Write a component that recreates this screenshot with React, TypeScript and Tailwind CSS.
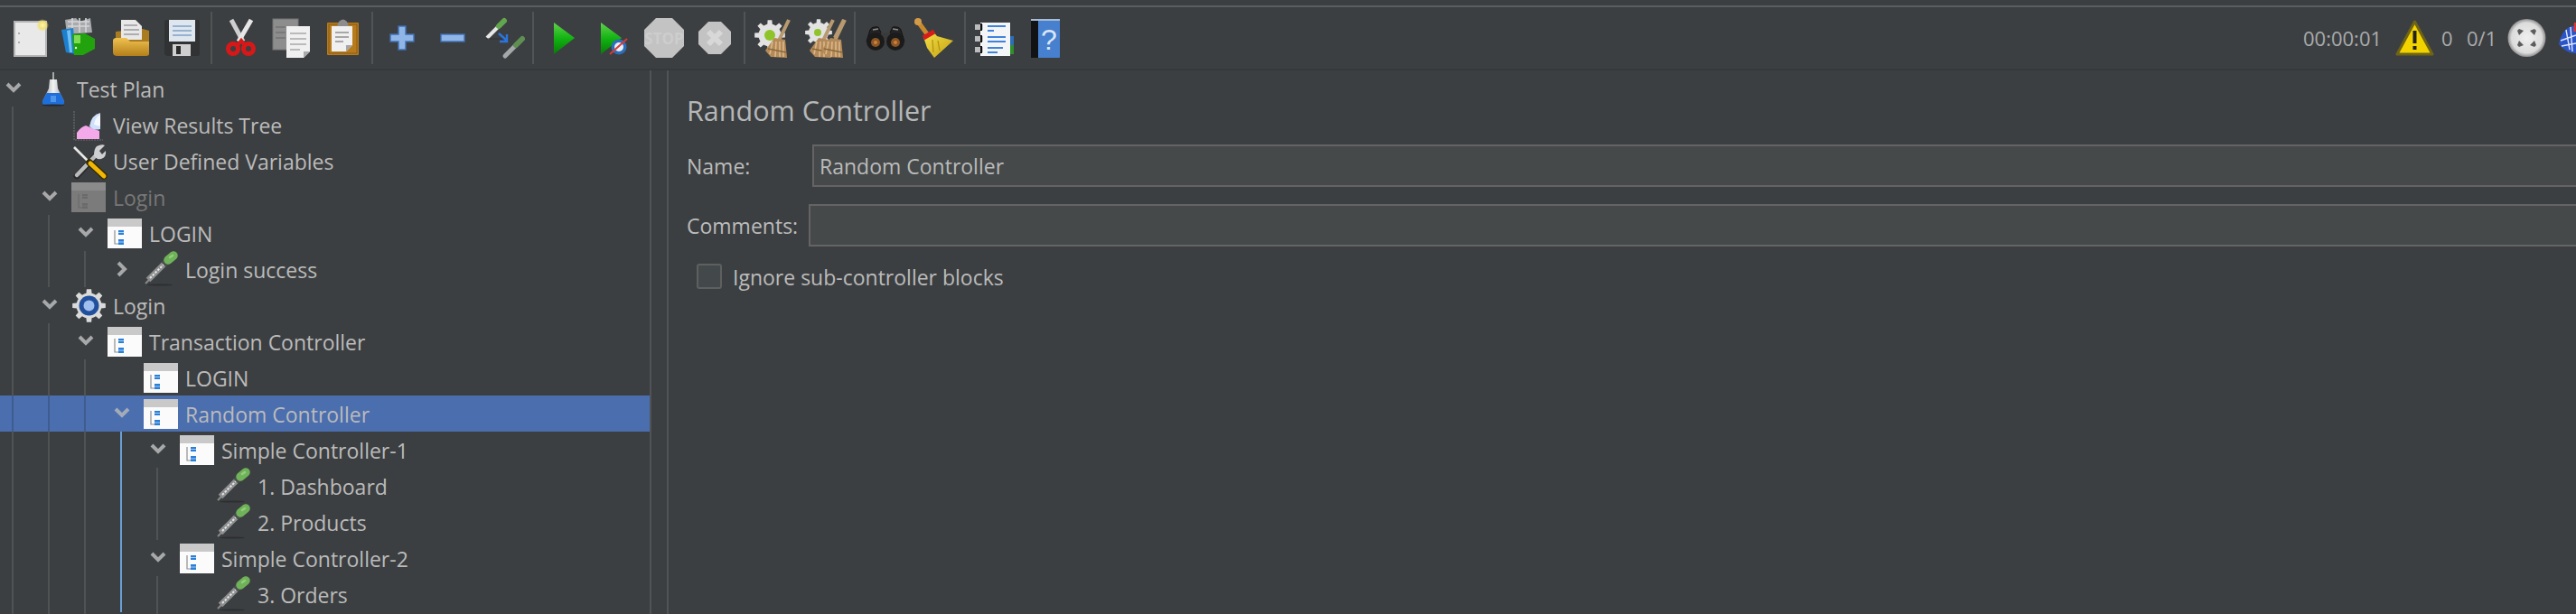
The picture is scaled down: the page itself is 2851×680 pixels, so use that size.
import React from "react";

const font = { fontFamily: '"Open Sans", "Noto Sans", sans-serif' };

function gearPath(cx: number, cy: number, ro: number, ri: number, teeth: number) {
  const pts: string[] = [];
  const step = (Math.PI * 2) / teeth;
  for (let i = 0; i < teeth; i++) {
    const a = i * step - Math.PI / 2;
    const list: [number, number][] = [
      [ri, a - step * 0.5],
      [ri, a - step * 0.28],
      [ro, a - step * 0.18],
      [ro, a + step * 0.18],
      [ri, a + step * 0.28],
    ];
    for (const [r, t] of list) pts.push(`${(cx + r * Math.cos(t)).toFixed(2)} ${(cy + r * Math.sin(t)).toFixed(2)}`);
  }
  return "M" + pts.join("L") + "Z";
}

function Tb({ left, children }: { left: number; children: React.ReactNode }) {
  return (
    <div className="w-[56px] h-full shrink-0 flex items-center justify-center">
      <svg width={48} height={48} viewBox={`${left} 18 48 48`}>
        {children}
      </svg>
    </div>
  );
}

function Sep() {
  return (
    <div className="w-[10px] h-full shrink-0 flex items-center justify-center">
      <div className="w-[2px] h-[58px] bg-[#515455]" />
    </div>
  );
}

const Broom = ({ x, y, s = 1 }: { x: number; y: number; s?: number }) => (
  <g transform={`translate(${x} ${y}) scale(${s})`}>
    <path d="M26 0 L15 23" stroke="#b89a70" strokeWidth="4" fill="none" />
    <path d="M10 20 L22 22 L24 42 L6 41 L0 34 Z" fill="#b58a58" />
    <path d="M8 24 L5 38 M12 24 L11 41 M16 24 L16 41 M20 24 L20 41" stroke="#d8b88c" strokeWidth="1.6" />
    <path d="M3 32 L23 36" stroke="#8a6738" strokeWidth="1.4" />
  </g>
);

function Toolbar() {
  return (
    <div className="h-[68px] flex items-center pl-[5px] border-b-2 border-[#36393b] box-content shrink-0">
      <Tb left={9}>
        <defs>
          <radialGradient id="sun">
            <stop offset="0" stopColor="#fff6b0" />
            <stop offset="0.55" stopColor="#f1e07a" />
            <stop offset="1" stopColor="#f1e07a" stopOpacity="0" />
          </radialGradient>
        </defs>
        <rect x="16" y="24" width="35" height="38" fill="#e9e9e9" stroke="#b4b4b4" strokeWidth="2" />
        <circle cx="21" cy="37" r="1" fill="#999" />
        <circle cx="21" cy="47" r="1" fill="#999" />
        <circle cx="47" cy="28" r="7" fill="url(#sun)" />
      </Tb>
      <Tb left={65}>
        <path d="M72 22 L84 20 L88 24 L100 20 L102 36 L74 38 Z" fill="#a8aaad" />
        <path d="M75 24 L99 24 M75 29 L99 29 M80 20 L80 36 M88 20 L88 36 M95 20 L95 36" stroke="#d5d6d8" strokeWidth="1.6" />
        <path d="M68 33 L81 31 L84 60 L73 58 Z" fill="#1d7fd0" />
        <path d="M74 34 L78 33 L80 58 L77 58 Z" fill="#6ec1f0" />
        <path d="M80 38 L94 37 L105 43 L105 54 L92 61 L82 61 Z" fill="#22a30e" />
        <path d="M82 39 L89 39 L89 48 L82 48 Z" fill="#7fdc52" />
        <circle cx="84" cy="53" r="1.2" fill="#e8ffe0" />
      </Tb>
      <Tb left={121}>
        <defs>
          <linearGradient id="fold" x1="0" y1="0" x2="0" y2="1">
            <stop offset="0" stopColor="#f0c14f" />
            <stop offset="1" stopColor="#b37f1a" />
          </linearGradient>
        </defs>
        <path d="M128 35 L158 32 L165 34 L165 60 L128 60 Z" fill="#a97c22" />
        <path d="M134 22 L150 22 L157 29 L157 44 L134 44 Z" fill="#e8e8e8" />
        <path d="M137 28 L152 28 M137 33 L154 33 M137 38 L154 38" stroke="#9a9a9a" strokeWidth="1.6" />
        <path d="M125 45 Q125 42 129 42 L140 42 L144 46 L165 46 L165 60 Q165 62 160 62 L130 62 Q125 62 125 58 Z" fill="url(#fold)" />
      </Tb>
      <Tb left={177}>
        <path d="M182 24 Q182 22 184 22 L220 22 L221 24 L221 60 Q221 62 218 62 L186 62 Q182 62 182 59 Z" fill="#303234" />
        <rect x="187" y="22" width="29" height="24" fill="#dfe6ee" />
        <path d="M191 29 L212 29 M191 34 L212 34 M191 39 L212 39" stroke="#7ea2c8" strokeWidth="1.7" />
        <rect x="191" y="49" width="20" height="13" fill="#cfcfcf" />
        <rect x="195" y="51" width="5" height="9" fill="#2c2c2c" />
      </Tb>
      <Sep />
      <Tb left={243}>
        <path d="M256 22 L269 46" stroke="#cfcfcf" strokeWidth="5" />
        <path d="M278 22 L264 46" stroke="#e6e6e6" strokeWidth="5" />
        <circle cx="258" cy="54" r="5.5" fill="none" stroke="#d81818" strokeWidth="5" />
        <circle cx="275" cy="54" r="5.5" fill="none" stroke="#d81818" strokeWidth="5" />
        <path d="M263 50 L267 45 L271 50" stroke="#d81818" strokeWidth="4" fill="none" />
      </Tb>
      <Tb left={299}>
        <rect x="302" y="21" width="28" height="34" fill="#8d8d8d" stroke="#777" strokeWidth="1" />
        <path d="M305 30 L316 30 M305 36 L316 36 M305 42 L316 42" stroke="#737373" strokeWidth="1.7" />
        <path d="M317 29 L343 29 L343 57 L336 64 L317 64 Z" fill="#f0f0f0" />
        <path d="M343 57 L336 57 L336 64 Z" fill="#aaa" />
        <path d="M321 37 L339 37 M321 43 L339 43 M321 49 L339 49 M321 55 L332 55" stroke="#a8a8a8" strokeWidth="1.7" />
      </Tb>
      <Tb left={355}>
        <rect x="362" y="25" width="35" height="36" rx="1" fill="#b87b1c" />
        <rect x="364" y="27" width="31" height="32" fill="none" stroke="#8a5a12" strokeWidth="1" />
        <path d="M367 29 L390 29 L390 50 L383 57 L367 57 Z" fill="#f0f0f0" />
        <path d="M390 50 L383 50 L383 57 Z" fill="#a5a5a5" />
        <path d="M371 36 L386 36 M371 41 L386 41 M371 46 L380 46" stroke="#8f8f8f" strokeWidth="1.7" />
        <path d="M373 29 L375 24 Q380 19 384 24 L386 29 Z" fill="#8d8d8d" />
      </Tb>
      <Sep />
      <Tb left={421}>
        <path d="M441 29 H449 V38 H458 V46 H449 V55 H441 V46 H432 V38 H441 Z" fill="#8fb6e6" stroke="#3f6fb5" strokeWidth="1.4" />
      </Tb>
      <Tb left={477}>
        <rect x="488" y="38" width="26" height="8" fill="#8fb6e6" stroke="#3f6fb5" strokeWidth="1.4" />
      </Tb>
      <Tb left={533}>
        <path d="M539 42 L552 29" stroke="#e6e6e6" strokeWidth="4" />
        <path d="M552 29 L558 23" stroke="#62a64e" strokeWidth="6" strokeLinecap="round" />
        <path d="M538 43 L562 43" stroke="#2e3032" strokeWidth="1" />
        <path d="M552 37 L561 45 M561 38 L561 46 L553 46" stroke="#2b74e0" strokeWidth="2.4" fill="none" />
        <path d="M559 62 L571 50" stroke="#a5a8a9" strokeWidth="5" strokeLinecap="round" />
        <path d="M571 50 L578 43" stroke="#5f8f52" strokeWidth="6" strokeLinecap="round" />
      </Tb>
      <Sep />
      <Tb left={599}>
        <defs>
          <linearGradient id="pl" x1="0" y1="0" x2="0" y2="1">
            <stop offset="0" stopColor="#62d24c" />
            <stop offset="0.5" stopColor="#12b312" />
            <stop offset="1" stopColor="#067d06" />
          </linearGradient>
        </defs>
        <path d="M613 25 L636 42 L613 60 Z" fill="url(#pl)" />
      </Tb>
      <Tb left={655}>
        <defs>
          <linearGradient id="pl2" x1="0" y1="0" x2="0" y2="1">
            <stop offset="0" stopColor="#62d24c" />
            <stop offset="0.5" stopColor="#12b312" />
            <stop offset="1" stopColor="#067d06" />
          </linearGradient>
        </defs>
        <path d="M665 25 L688 42 L665 60 Z" fill="url(#pl2)" />
        <circle cx="685" cy="52" r="8.5" fill="#2d6eb8" />
        <circle cx="685" cy="52" r="5" fill="#e9f0f8" />
        <path d="M675 60 L694 43" stroke="#d93a3a" strokeWidth="2" />
      </Tb>
      <Tb left={711}>
        <path d="M726 20 L744 20 L757 33 L757 51 L744 64 L726 64 L713 51 L713 33 Z" fill="#c3c3c3" />
        <text x="735" y="49" textAnchor="middle" fontSize="17" fontWeight="700" fill="#cdcdcd" style={font}>STOP</text>
      </Tb>
      <Tb left={767}>
        <path d="M784 24 L798 24 L809 35 L809 49 L798 60 L784 60 L773 49 L773 35 Z" fill="#c3c3c3" />
        <path d="M784 35 L798 49 M798 35 L784 49" stroke="#d8d8d8" strokeWidth="6" />
      </Tb>
      <Sep />
      <Tb left={833}>
        <path d={gearPath(852, 39, 17, 12.5, 8)} fill="#e2e2e2" />
        <circle cx="852" cy="39" r="6" fill="#8fc32a" />
        <Broom x={847} y={22} />
      </Tb>
      <Tb left={889}>
        <path d={gearPath(906, 36, 15, 11, 8)} fill="#e2e2e2" />
        <circle cx="905" cy="36" r="4" fill="#8fc32a" />
        <path d="M934 22 L924 42" stroke="#b89a70" strokeWidth="4" />
        <Broom x={896} y={22} />
        <Broom x={909} y={22} />
      </Tb>
      <Sep />
      <Tb left={955}>
        <path d="M963 33 Q965 29 972 30 L976 38 L984 38 L988 30 Q995 29 997 33 L1001 46 L990 40 L970 40 L959 46 Z" fill="#232323" stroke="#111" />
        <path d="M966 33 L972 32 M988 32 L994 33" stroke="#8b8b8b" strokeWidth="1.5" />
        <rect x="975" y="36" width="10" height="7" fill="#3a3a3a" />
        <circle cx="969" cy="46" r="10" fill="#1b1b1b" />
        <circle cx="991" cy="46" r="10" fill="#1b1b1b" />
        <circle cx="969" cy="47" r="5" fill="#8d5524" />
        <circle cx="991" cy="47" r="5" fill="#8d5524" />
        <circle cx="969" cy="47" r="2" fill="#c8823c" />
        <circle cx="991" cy="47" r="2" fill="#c8823c" />
      </Tb>
      <Tb left={1011}>
        <defs>
          <linearGradient id="brm" x1="0" y1="0" x2="1" y2="1">
            <stop offset="0" stopColor="#f5e34a" />
            <stop offset="1" stopColor="#c49f10" />
          </linearGradient>
        </defs>
        <path d="M1016 24 L1027 39" stroke="#c98a2e" strokeWidth="5" strokeLinecap="round" />
        <circle cx="1016" cy="24" r="4" fill="#d39b48" />
        <path d="M1022 41 L1033 35 L1037 40 L1055 45 L1034 64 L1026 53 Z" fill="url(#brm)" />
        <path d="M1022 42 L1034 35" stroke="#d81c1c" strokeWidth="5" />
        <path d="M1032 44 L1033 58 M1038 45 L1040 56" stroke="#b5940f" strokeWidth="1.3" />
      </Tb>
      <Sep />
      <Tb left={1077}>
        <rect x="1117" y="40" width="5" height="10" fill="#2d6eb8" />
        <rect x="1117" y="50" width="5" height="10" fill="#2f8f2c" />
        <rect x="1085" y="25" width="33" height="37" fill="#f4f5f6" />
        <rect x="1079" y="27" width="9" height="6" fill="#bcbcbc" />
        <rect x="1079" y="40" width="9" height="6" fill="#bcbcbc" />
        <rect x="1079" y="52" width="9" height="6" fill="#bcbcbc" />
        <rect x="1085" y="26" width="2" height="8" fill="#111" />
        <rect x="1085" y="39" width="2" height="8" fill="#111" />
        <rect x="1085" y="51" width="2" height="8" fill="#111" />
        <path d="M1093 29 H1113 M1093 34 H1100 M1093 41 H1113 M1093 46 H1113 M1093 53 H1110 M1093 58 H1104" stroke="#3f83dd" strokeWidth="1.8" />
      </Tb>
      <Tb left={1133}>
        <rect x="1141" y="21" width="32" height="43" rx="1" fill="#4680cf" />
        <rect x="1141" y="21" width="8" height="43" fill="#101214" />
        <rect x="1141" y="21" width="32" height="2" fill="#a8bcd6" />
        <text x="1161" y="55" textAnchor="middle" fontSize="32" fill="#dbe7f7" style={{ fontFamily: '"Liberation Sans", sans-serif' }}>?</text>
      </Tb>

      <div className="ml-auto flex items-center h-full text-[22px] text-[#a9abac] shrink-0" style={font}>
        <span className="w-[102px]">00:00:01</span>
        <svg width={43} height={42} viewBox="0 0 43 42" className="shrink-0">
          <path d="M21.5 3 L41 39 L2 39 Z" fill="#f2d300" stroke="#6f6414" strokeWidth="3" strokeLinejoin="round" />
          <rect x="19.5" y="13" width="4" height="14" fill="#222" />
          <rect x="19.5" y="30" width="4" height="4" fill="#222" />
        </svg>
        <span className="w-[28px] pl-[8px] box-content">0</span>
        <span className="w-[45px]">0/1</span>
        <svg width={43} height={42} viewBox="0 0 43 42" className="shrink-0">
          <defs>
            <radialGradient id="glb">
              <stop offset="0" stopColor="#efefef" />
              <stop offset="0.8" stopColor="#dcdcdc" />
              <stop offset="1" stopColor="#8e8e8e" />
            </radialGradient>
          </defs>
          <circle cx="21.5" cy="21" r="21" fill="url(#glb)" />
          <path d="M13 11 L18 13 L13 18 L11 13 Z M30 11 L32 13 L30 18 L25 13 Z M11 29 L13 24 L18 29 L13 31 Z M32 29 L30 31 L25 29 L30 24 Z" fill="#5c5c5c" />
        </svg>
        <svg width={33} height={42} viewBox="0 0 33 42" className="shrink-0 ml-[14px] mr-[-14px]">
          <path d="M0 28 Q3 12 14 8 L19 8 L19 38 Q8 38 0 28 Z" fill="#2a55c8" />
          <path d="M2 24 L19 18 M3 30 L19 27 M8 12 L12 34 M13 9 L15 36" stroke="#dfe7ff" strokeWidth="1.4" />
          <path d="M17 4 L19 4 L19 14 L16 14 Z" fill="#d23a3a" />
        </svg>
      </div>
    </div>
  );
}

const Dropper = () => (
  <>
    <ellipse cx="17" cy="37.5" rx="14" ry="1" fill="#2c2e30" />
    <path d="M1 36 L5 32" stroke="#8a8a8a" strokeWidth="2" />
    <path d="M4 32 L22 14" stroke="#8d8f90" strokeWidth="6.5" />
    <path d="M6 30 L21 15" stroke="#e6e6e6" strokeWidth="2" strokeDasharray="2.5 1.5" />
    <path d="M21 15 L25 11" stroke="#4a4d4e" strokeWidth="7.5" />
    <path d="M26 10 L32 5" stroke="#6fb259" strokeWidth="9.5" strokeLinecap="round" />
    <path d="M28 7 L31 5" stroke="#93cf7a" strokeWidth="2.5" strokeLinecap="round" />
  </>
);

const Window = ({ gray }: { gray?: boolean }) => (
  <>
    <rect x="-1" y="4" width="38" height="33" fill={gray ? "#7b7b7b" : "#fbfbfb"} />
    <rect x="-1" y="4" width="38" height="9" fill={gray ? "#8b8b8b" : "#c9c9c9"} />
    <path d="M7 17 L7 32 L12 32" stroke={gray ? "#6a6a6a" : "#8f8f8f"} strokeWidth="1.2" fill="none" />
    <rect x="11" y="17" width="6" height="5" fill={gray ? "#6a6a6a" : "#2a7fd8"} />
    <rect x="11" y="27" width="6" height="6" fill={gray ? "#6a6a6a" : "#2a7fd8"} />
    <path d="M11 19.5 H17 M11 30 H17" stroke={gray ? "#767676" : "#a6cdf2"} strokeWidth="1" />
  </>
);

const icons: Record<string, React.ReactNode> = {
  flask: (
    <>
      <defs>
        <linearGradient id="fl" x1="0" y1="0" x2="1" y2="0">
          <stop offset="0" stopColor="#8d9298" />
          <stop offset="0.5" stopColor="#f2f3f4" />
          <stop offset="1" stopColor="#9a9ea3" />
        </linearGradient>
      </defs>
      <rect x="18" y="2" width="2" height="9" fill="#a8a8a8" />
      <path d="M15 10 L23 10 L24 20 L31 34 L7 34 L14 20 Z" fill="url(#fl)" />
      <path d="M11.5 25 L26.5 25 L31 34 Q32 38 28 38 L10 38 Q6 38 7 34 Z" fill="#1e6fdc" />
      <path d="M16 28 L22 28 L22 35 L16 35 Z" fill="#4f95ea" />
      <ellipse cx="19" cy="38.5" rx="12" ry="1" fill="#25282a" />
    </>
  ),
  graph: (
    <>
      <path d="M2 5 L2 37 L34 37" stroke="#6a6c6d" strokeWidth="1.2" strokeDasharray="2 1" fill="none" />
      <path d="M5 36 L5 29 Q10 22 15 21 L22 24 L30 27 L30 36 Z" fill="#f3a9ea" />
      <path d="M19 22 Q21 9 31 7 L31 25 Q24 27 19 22 Z" fill="#cfe0fb" />
      <path d="M24 20 Q25 12 31 9 L31 22 Z" fill="#f4f8ff" />
    </>
  ),
  tools: (
    <>
      <path d="M2 5 L20 23" stroke="#e8e8e8" strokeWidth="2.6" />
      <path d="M5 37 L28 12" stroke="#2a2a2a" strokeWidth="7" strokeLinecap="round" />
      <path d="M5 36 L28 12" stroke="#b9bbbc" strokeWidth="4.5" strokeLinecap="round" />
      <path d="M27 4 Q33 1 36 3 L30 9 L33 13 L37 9 Q38 16 32 18 Q26 19 24 14 Q24 7 27 4 Z" fill="#cfd0d1" />
      <path d="M19 22 L35 37" stroke="#332a00" strokeWidth="7.5" strokeLinecap="round" />
      <path d="M20 23 L35 37" stroke="#f2b705" strokeWidth="5" strokeLinecap="round" />
    </>
  ),
  gear: (
    <>
      <path d={gearPath(18.5, 20.5, 18.5, 14, 8)} fill="#dadada" />
      <circle cx="18.5" cy="20.5" r="11" fill="#224f9c" />
      <circle cx="18.5" cy="20.5" r="6" fill="#9fc0ee" />
    </>
  ),
  window: <Window />,
  grayWindow: <Window gray />,
  dropper: <Dropper />,
};

type Row = { level: number; label: string; icon: string; chev?: "down" | "right"; sel?: boolean; off?: boolean };

const rows: Row[] = [
  { level: 0, label: "Test Plan", icon: "flask", chev: "down" },
  { level: 1, label: "View Results Tree", icon: "graph" },
  { level: 1, label: "User Defined Variables", icon: "tools" },
  { level: 1, label: "Login", icon: "grayWindow", chev: "down", off: true },
  { level: 2, label: "LOGIN", icon: "window", chev: "down" },
  { level: 3, label: "Login success", icon: "dropper", chev: "right" },
  { level: 1, label: "Login", icon: "gear", chev: "down" },
  { level: 2, label: "Transaction Controller", icon: "window", chev: "down" },
  { level: 3, label: "LOGIN", icon: "window" },
  { level: 3, label: "Random Controller", icon: "window", chev: "down", sel: true },
  { level: 4, label: "Simple Controller-1", icon: "window", chev: "down" },
  { level: 5, label: "1. Dashboard", icon: "dropper" },
  { level: 5, label: "2. Products", icon: "dropper" },
  { level: 4, label: "Simple Controller-2", icon: "window", chev: "down" },
  { level: 5, label: "3. Orders", icon: "dropper" },
];

function Guide({ col, sel, last }: { col: number; sel?: boolean; last?: boolean }) {
  const color = col === 3 ? (last ? "bg-transparent" : "bg-[#6a9fd8]") : sel ? "bg-[#3f5c91]" : "bg-[#505354]";
  return (
    <div className="w-[40px] h-full shrink-0 pl-[13px]">
      <div className={`w-[2px] h-full ${color}`} />
    </div>
  );
}

function TreeRow({ r }: { r: Row }) {
  return (
    <div className={`h-[40px] flex items-center shrink-0 ${r.sel ? "bg-[#4b6eaf]" : ""}`}>
      {Array.from({ length: r.level }).map((_, i) => (
        <Guide key={i} col={i} sel={r.sel} />
      ))}
      <div className="w-[40px] h-full shrink-0">
        {r.chev === "down" && (
          <svg width={40} height={40} viewBox="0 0 40 40">
            <path d="M8 15 L15 22 L22 15" stroke={r.sel ? "#a3abb8" : "#a6a8a9"} strokeWidth="4" fill="none" />
          </svg>
        )}
        {r.chev === "right" && (
          <svg width={40} height={40} viewBox="0 0 40 40">
            <path d="M11 13 L18 20 L11 27" stroke="#a6a8a9" strokeWidth="4" fill="none" />
          </svg>
        )}
      </div>
      <svg width={45} height={40} viewBox="0 0 45 40" className="shrink-0 overflow-visible">
        {icons[r.icon]}
      </svg>
      <span className={`text-[23px] whitespace-nowrap pt-[2px] ${r.off ? "text-[#777777]" : "text-[#bbbbbb]"}`}>
        {r.label}
      </span>
    </div>
  );
}

export default function App() {
  return (
    <div className="w-[2851px] h-[680px] overflow-hidden bg-[#3c3f41] flex flex-col" style={font}>
      <div className="h-[6px] shrink-0" />
      <div className="h-[2px] bg-[#5b5e5f] shrink-0" />
      <Toolbar />
      <div className="flex-1 flex min-h-0">
        <div className="w-[719px] shrink-0 flex flex-col">
          {rows.map((r, i) => (
            <TreeRow key={i} r={r} />
          ))}
          <div className="h-[2px] flex shrink-0">
            {[0, 1, 2, 3, 4].map((c) => (
              <Guide key={c} col={c} last />
            ))}
          </div>
        </div>
        <div className="w-[2px] bg-[#515455] shrink-0" />
        <div className="w-[17px] shrink-0" />
        <div className="w-[2px] bg-[#515455] shrink-0" />
        <div className="flex-1 pl-[20px] pt-[22px] flex flex-col min-w-0 text-[#bbbbbb] text-[23px]">
          <div className="h-[46px] flex items-center text-[30.5px] text-[#b5b7b8] mb-[14px]">Random Controller</div>
          <div className="h-[47px] flex items-center mb-[19px]">
            <span className="w-[139px] shrink-0 pt-[2px]">Name:</span>
            <div className="flex-1 h-full border-2 border-[#646464] border-r-0 bg-[#45494a] flex items-center pl-[6px] pt-[2px]">
              Random Controller
            </div>
          </div>
          <div className="h-[47px] flex items-center mb-[19px]">
            <span className="w-[135px] shrink-0 pt-[2px]">Comments:</span>
            <div className="flex-1 h-full border-2 border-[#646464] border-r-0 bg-[#45494a]" />
          </div>
          <div className="h-[28px] flex items-center pl-[11px]">
            <div className="w-[28px] h-[28px] rounded-[3px] border-2 border-[#5e6060] bg-[#43494a] shrink-0" />
            <span className="ml-[12px] pt-[2px] whitespace-nowrap">Ignore sub-controller blocks</span>
          </div>
        </div>
      </div>
    </div>
  );
}
